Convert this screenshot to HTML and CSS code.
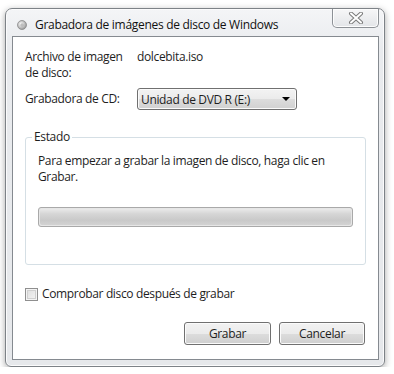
FILE: index.html
```html
<!DOCTYPE html>
<html lang="es">
<head>
<meta charset="utf-8">
<title>Grabadora de imágenes de disco de Windows</title>
<link rel="stylesheet" href="styles.css">
</head>
<body>
<div class="window">
  <div class="titlebar">
    <svg class="app-icon" width="10" height="10" viewBox="0 0 10 10">
      <defs>
        <radialGradient id="disc" cx="0.4" cy="0.4" r="0.6">
          <stop offset="0" stop-color="#ffffff"/>
          <stop offset="1" stop-color="#9a9a9a"/>
        </radialGradient>
      </defs>
      <circle cx="5" cy="5" r="4.5" fill="url(#disc)" stroke="#8c8c8c" stroke-width="0.8"/>
      <circle cx="5" cy="5" r="1.2" fill="#dcdcdc" stroke="#8c8c8c" stroke-width="0.5"/>
    </svg>
    <span class="title">Grabadora de imágenes de disco de Windows</span>
    <div class="close">
      <svg width="16" height="12" viewBox="0 0 16 12">
        <path d="M3 1.5 L13 10.5 M13 1.5 L3 10.5" stroke="#7a7a7a" stroke-width="4" stroke-linecap="round"/>
        <path d="M3 1.5 L13 10.5 M13 1.5 L3 10.5" stroke="#ffffff" stroke-width="2" stroke-linecap="round"/>
      </svg>
    </div>
  </div>
  <div class="client">
    <div class="row row-file">
      <div class="label">Archivo de imagen<br>de disco:</div>
      <div class="value">dolcebita.iso</div>
    </div>
    <div class="row row-drive">
      <div class="label">Grabadora de CD:</div>
      <div class="select">
        <span>Unidad de DVD R (E:)</span>
        <span class="arrow"></span>
      </div>
    </div>
    <fieldset class="group">
      <legend>Estado</legend>
      <p class="status">Para empezar a grabar la imagen de disco, haga clic en Grabar.</p>
      <div class="progress"><div class="progress-fill"></div></div>
    </fieldset>
    <label class="check">
      <span class="box"></span>
      <span>Comprobar disco después de grabar</span>
    </label>
    <div class="buttons">
      <button class="btn btn-burn">Grabar</button>
      <button class="btn btn-cancel">Cancelar</button>
    </div>
  </div>
</div>
</body>
</html>
```
FILE: styles.css
```css
* { box-sizing: border-box; }

html, body {
  margin: 0;
  background: #ffffff;
}

body {
  padding: 8px 0 0 5px;
  font-family: "Open Sans", "Noto Sans", "Liberation Sans", sans-serif;
  font-size: 12px;
  color: #1e1e1e;
}

.window {
  width: 380px;
  height: 359px;
  border: 1px solid #7d8287;
  border-radius: 7px 7px 6px 6px;
  background: linear-gradient(#f4f5f7, #e9ebee 40px, #e6e8eb);
  box-shadow: 0 2px 7px rgba(0,0,0,0.35), inset 0 0 0 1px #fbfbfc;
  padding: 0 5px 6px 6px;
  display: flex;
  flex-direction: column;
}

.titlebar {
  height: 27px;
  display: flex;
  align-items: center;
  position: relative;
  padding-left: 5px;
}

.app-icon {
  margin-top: 4px;
}

.title {
  margin-left: 8px;
  margin-top: 4px;
  font-size: 12px;
  color: #111;
  letter-spacing: -0.3px;
}

.close {
  position: absolute;
  top: 0;
  right: 0;
  width: 47px;
  height: 19px;
  border: 1px solid #8d9196;
  border-top: none;
  border-radius: 0 0 5px 5px;
  background: linear-gradient(#f7f7f8, #e3e5e8);
  display: flex;
  align-items: center;
  justify-content: center;
  box-shadow: inset 0 0 0 1px #fdfdfd;
}

.client {
  flex: 1;
  background: #ffffff;
  border: 1px solid #858a90;
  padding: 12px 12px 14px 12px;
  display: flex;
  flex-direction: column;
  letter-spacing: -0.35px;
}

.row {
  display: flex;
  align-items: center;
}

.row-file {
  align-items: flex-start;
  line-height: 16px;
}

.label {
  width: 112px;
  line-height: 16px;
}

.value {
  line-height: 16px;
}

.row-drive {
  margin-top: 7px;
}

.select {
  width: 160px;
  height: 22px;
  border: 1px solid #707070;
  border-radius: 3px;
  background: linear-gradient(#f3f3f3, #ebebeb 50%, #dddddd 50%, #d1d1d1);
  display: flex;
  align-items: center;
  justify-content: space-between;
  padding: 0 6px 0 3px;
  box-shadow: inset 0 0 0 1px #fbfbfb;
}

.arrow {
  width: 0;
  height: 0;
  border-left: 4px solid transparent;
  border-right: 4px solid transparent;
  border-top: 4px solid #000;
}

.group {
  margin: 19px 0 0 0;
  height: 136px;
  border: 1px solid #d5dfe5;
  border-radius: 3px;
  padding: 2px 12px 0 12px;
  box-shadow: inset 1px 1px 0 #ffffff;
}

.group legend {
  padding: 0 2px;
  margin-left: -6px;
  line-height: 16px;
}

.status {
  margin: 6px 0 0 0;
  line-height: 16px;
}

.progress {
  margin-top: 22px;
  height: 20px;
  border: 1px solid #a9a9a9;
  border-radius: 3px;
  padding: 1px;
  background: #e6e6e6;
}

.progress-fill {
  height: 100%;
  border-radius: 2px;
  background: linear-gradient(#e9e9e9, #d6d6d6 30%, #c9c9c9 70%, #d2d2d2);
}

.check {
  margin-top: 21px;
  display: flex;
  align-items: center;
  line-height: 16px;
}

.box {
  width: 13px;
  height: 13px;
  border: 1px solid #8f8f8f;
  background: linear-gradient(135deg, #dcdcdc, #f6f6f6);
  box-shadow: inset 0 0 0 1px #f4f4f4, inset 0 0 0 2px #d0d0d0;
  margin-right: 4px;
}

.buttons {
  margin-top: auto;
  display: flex;
  justify-content: flex-end;
  gap: 8px;
  padding-right: 1px;
}

.btn {
  font-family: inherit;
  font-size: 12px;
  letter-spacing: -0.35px;
  color: #1e1e1e;
  height: 23px;
  border: 1px solid #707070;
  border-radius: 3px;
  background: linear-gradient(#f2f2f2, #ebebeb 50%, #dddddd 50%, #cfcfcf);
  box-shadow: inset 0 0 0 1px #fbfbfb;
  padding: 0;
}

.btn-burn { width: 87px; }
.btn-cancel { width: 86px; }
```
